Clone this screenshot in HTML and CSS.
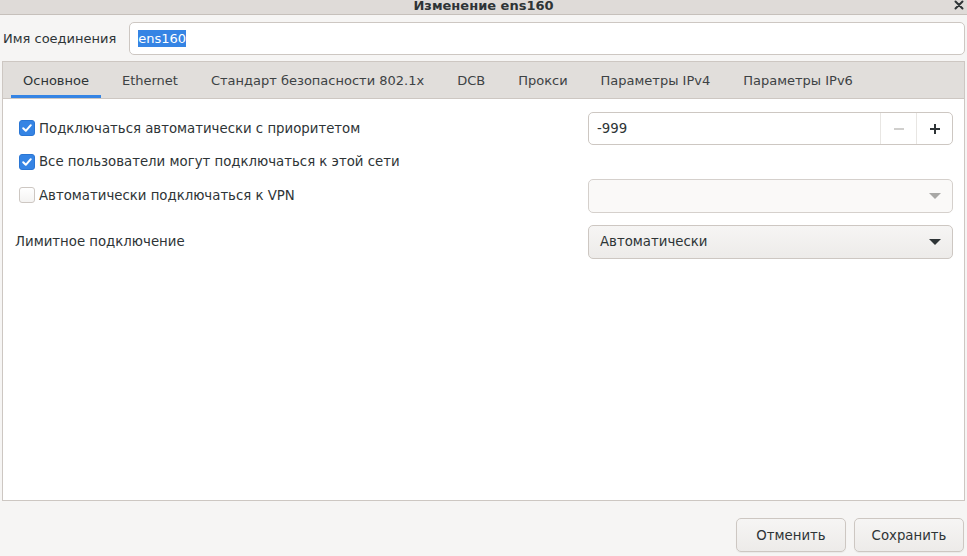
FILE: index.html
```html
<!DOCTYPE html>
<html lang="ru">
<head>
  <meta charset="UTF-8">
  <title>Изменение ens160</title>
<link rel="stylesheet" href="styles.css">
</head>
<body>
    <div class="dialog">
        <div class="titlebar">
            <span class="title">Изменение ens160</span>
            <span class="close">
                <svg width="10" height="10" viewBox="0 0 10 10"><path d="M1.5 1.5 L8.5 8.5 M8.5 1.5 L1.5 8.5" stroke="#2e3436" stroke-width="2" stroke-linecap="round"/></svg>
            </span>
        </div>

        <div class="name-row">
            <label class="name-label">Имя соединения</label>
            <div class="entry name-entry"><span class="selected">ens160</span></div>
        </div>

        <div class="notebook">
            <div class="tabs">
                <div class="tab active">Основное</div>
                <div class="tab">Ethernet</div>
                <div class="tab">Стандарт безопасности 802.1x</div>
                <div class="tab">DCB</div>
                <div class="tab">Прокси</div>
                <div class="tab">Параметры IPv4</div>
                <div class="tab">Параметры IPv6</div>
            </div>
            <div class="page">
                <div class="form-grid">
                    <label class="check-row">
                        <span class="checkbox checked">
                            <svg width="12" height="12" viewBox="0 0 12 12"><path d="M2.2 6.2 L4.8 8.8 L9.8 3.2" fill="none" stroke="#fff" stroke-width="2" stroke-linecap="round" stroke-linejoin="round"/></svg>
                        </span>
                        Подключаться автоматически с приоритетом
                    </label>
                    <div class="spin">
                        <span class="spin-value">-999</span>
                        <span class="spin-btn dim">
                            <svg width="12" height="12" viewBox="0 0 12 12"><path d="M1 6 H11" stroke="#c0bfbc" stroke-width="1.5"/></svg>
                        </span>
                        <span class="spin-btn">
                            <svg width="12" height="12" viewBox="0 0 12 12"><path d="M1 6 H11 M6 1 V11" stroke="#2e3436" stroke-width="2"/></svg>
                        </span>
                    </div>

                    <label class="check-row short">
                        <span class="checkbox checked">
                            <svg width="12" height="12" viewBox="0 0 12 12"><path d="M2.2 6.2 L4.8 8.8 L9.8 3.2" fill="none" stroke="#fff" stroke-width="2" stroke-linecap="round" stroke-linejoin="round"/></svg>
                        </span>
                        Все пользователи могут подключаться к этой сети
                    </label>
                    <div></div>

                    <label class="check-row">
                        <span class="checkbox"></span>
                        Автоматически подключаться к VPN
                    </label>
                    <div class="combo disabled">
                        <span></span>
                        <svg width="12" height="8" viewBox="0 0 12 8"><path d="M0 1 H12 L6 7 Z" fill="#a8a8a6"/></svg>
                    </div>

                    <div class="plain-label">Лимитное подключение</div>
                    <div class="combo">
                        <span>Автоматически</span>
                        <svg width="12" height="8" viewBox="0 0 12 8"><path d="M0 1 H12 L6 7 Z" fill="#2e3436"/></svg>
                    </div>
                </div>
            </div>
        </div>

        <div class="actions">
            <button class="btn">Отменить</button>
            <button class="btn">Сохранить</button>
        </div>
    </div>
</body>
</html>
```

FILE: styles.css
```css
body {
    margin: 0;
    font-family: "DejaVu Sans", "Noto Sans", sans-serif;
    font-size: 13.3px;
    color: #2e3436;
    background-color: #f6f5f4;
}
.dialog {
    width: 967px;
    height: 556px;
    display: flex;
    flex-direction: column;
    overflow: hidden;
}
.titlebar {
    height: 14px;
    background-color: #dfdbd8;
    border-bottom: 1px solid #c6c0bb;
    display: flex;
    align-items: center;
    justify-content: center;
    position: relative;
}
.title {
    font-weight: bold;
    font-size: 13px;
    line-height: 14px;
    margin-top: -3px;
}
.close {
    position: absolute;
    right: 3px;
    top: 0;
    display: flex;
}
.name-row {
    display: flex;
    align-items: center;
    margin: 7px 2px 0 3px;
    font-size: 13px;
}
.name-label {
    margin-right: 13px;
}
.entry {
    background-color: #fff;
    border: 1px solid #cdc7c2;
    border-radius: 5px;
    box-sizing: border-box;
}
.name-entry {
    flex: 1;
    height: 33px;
    display: flex;
    align-items: center;
    padding-left: 8px;
}
.selected {
    background-color: #3584e4;
    color: #fff;
    line-height: 17px;
}
.notebook {
    margin: 6px 2px 0 2px;
    border: 1px solid #cdc7c2;
    flex: 1;
    display: flex;
    flex-direction: column;
    background-color: #fff;
}
.tabs {
    height: 36px;
    background-color: #e1dedb;
    border-bottom: 1px solid #cdc7c2;
    display: flex;
    padding-left: 8px;
    gap: 9px;
    font-size: 13px;
}
.tab {
    padding: 0 12px;
    display: flex;
    align-items: center;
    color: #3d4244;
    box-sizing: border-box;
    border-bottom: 3px solid transparent;
    padding-top: 3px;
}
.tab.active {
    color: #2e3436;
    border-bottom-color: #3584e4;
}
.page {
    flex: 1;
    padding: 13px 11px 0 12px;
}
.form-grid {
    display: grid;
    grid-template-columns: 1fr 365px;
    grid-template-rows: 33px 22px 33px 33px;
    row-gap: 6px;
    align-items: center;
}
.check-row {
    display: flex;
    align-items: center;
    gap: 4px;
    margin-left: 4px;
    margin-top: -1px;
}
.checkbox {
    width: 16px;
    height: 16px;
    box-sizing: border-box;
    border: 1px solid #cdc7c2;
    border-radius: 3px;
    background: linear-gradient(#fff, #f4f3f2);
    display: flex;
    align-items: center;
    justify-content: center;
}
.checkbox.checked {
    background: #3584e4;
    border-color: #2a76d4;
}
.plain-label {
    margin-top: 13px;
}
.spin {
    height: 33px;
    box-sizing: border-box;
    background-color: #fff;
    border: 1px solid #cdc7c2;
    border-radius: 5px;
    display: flex;
    align-items: center;
}
.spin-value {
    flex: 1;
    padding-left: 8px;
}
.spin-btn {
    width: 35px;
    height: 100%;
    border-left: 1px solid #e8e6e3;
    display: flex;
    align-items: center;
    justify-content: center;
}
.combo {
    height: 34px;
    box-sizing: border-box;
    border: 1px solid #cdc7c2;
    border-radius: 5px;
    background: linear-gradient(#f6f5f4, #edebe9);
    display: flex;
    align-items: center;
    justify-content: space-between;
    padding: 0 11px 0 11px;
}
.combo.disabled {
    background: #faf9f8;
    border-color: #d5d0cc;
}
.combo:not(.disabled) {
    margin-top: 14px;
}
.actions {
    display: flex;
    justify-content: flex-end;
    gap: 8px;
    margin: 17px 3px 4px 0;
}
.btn {
    width: 110px;
    height: 34px;
    font-family: "DejaVu Sans", "Noto Sans", sans-serif;
    font-size: 13.3px;
    color: #2e3436;
    border: 1px solid #cdc7c2;
    border-radius: 5px;
    background: linear-gradient(#f6f5f4, #edebe9);
    box-shadow: 0 1px 1px rgba(0, 0, 0, 0.05);
}
```
